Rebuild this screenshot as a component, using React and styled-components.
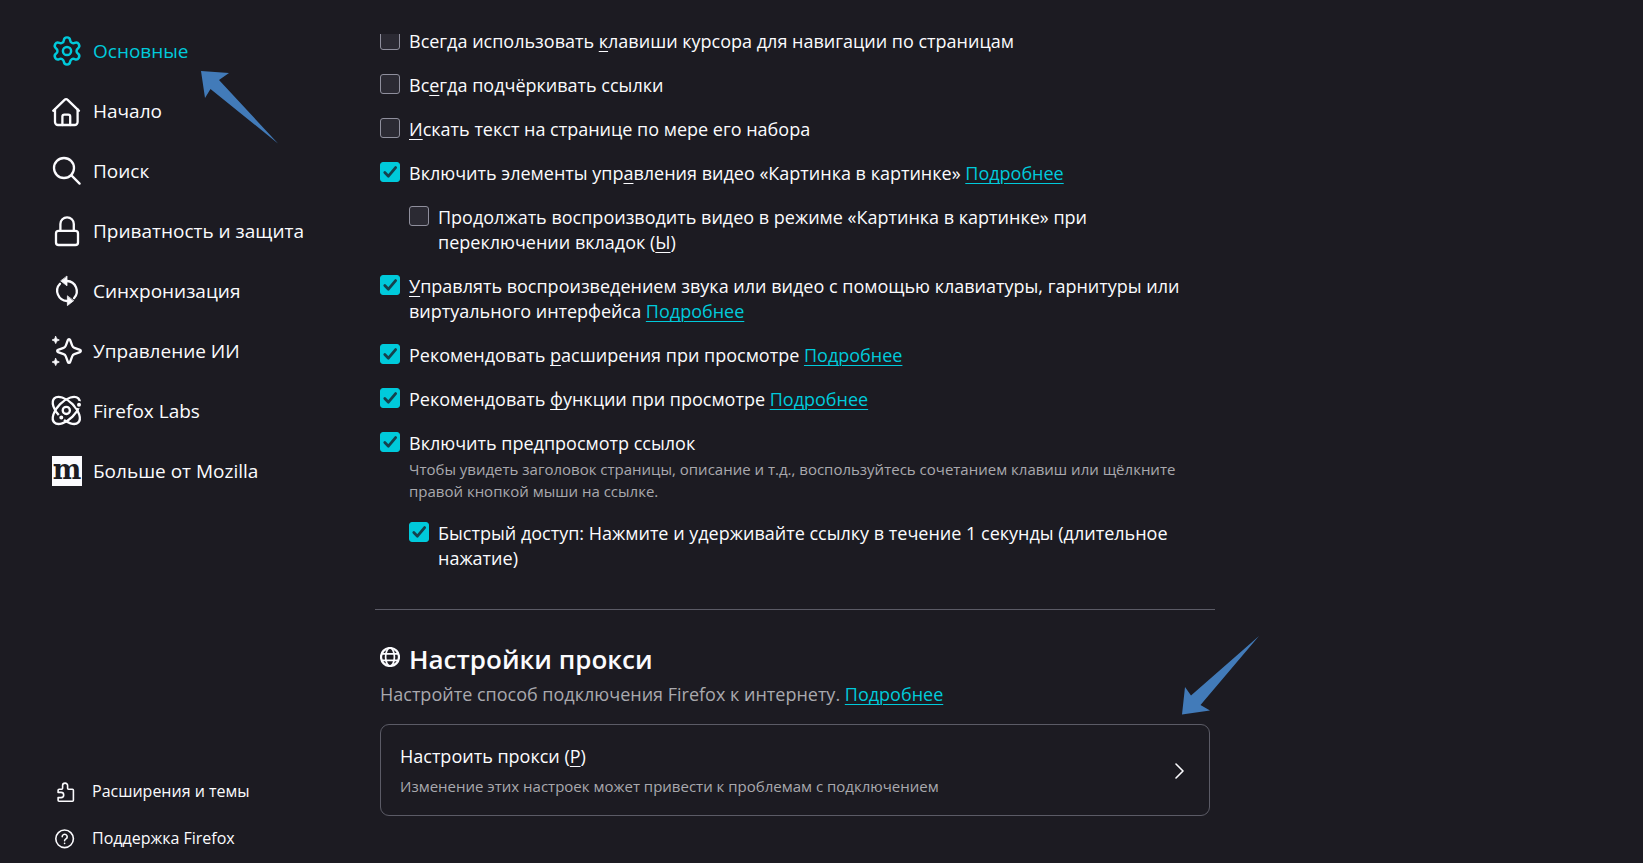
import React, { useState } from "react";
import styled, { createGlobalStyle } from "styled-components";
import { Settings } from "lucide-react";

const GlobalStyle = createGlobalStyle`
  * {
    box-sizing: border-box;
  }
  body {
    margin: 0;
    background: #1c1b22;
    color: #fbfbfe;
    font-family: "Open Sans", "Noto Sans", sans-serif;
    font-size: 18px;
    line-height: 25px;
  }
`;

const HomeIcon = () => (
  <NavSvg viewBox="0 0 30 30">
    <path d="M1.2 14.8 12.8 3.6a1.8 1.8 0 0 1 2.6 0L27 14.8" />
    <path d="M3 13.4V26a3 3 0 0 0 3 3h16.6a3 3 0 0 0 3-3V13.4" />
    <path d="M10.4 29v-8.4a2 2 0 0 1 2-2h3.8a2 2 0 0 1 2 2V29" />
  </NavSvg>
);

const SearchIcon = () => (
  <NavSvg viewBox="0 0 30 30">
    <circle cx="12" cy="12" r="10" />
    <path d="M19.4 19.4 27.6 27.6" />
  </NavSvg>
);

const LockIcon = () => (
  <NavSvg viewBox="0 0 30 30">
    <rect x="4" y="14.8" width="22" height="14.2" rx="2.6" />
    <path d="M8.4 14.6V8a6.7 6.7 0 0 1 13.4 0v6.6" />
  </NavSvg>
);

const SyncIcon = () => (
  <NavSvg viewBox="0 0 30 30">
    <path d="M15 5a10.2 10.2 0 0 1 7 17.2M15 25A10.2 10.2 0 0 1 8 7.8" />
    <path className="solid" d="M15 .4v9.4L9 5.1zM15.4 20.2v9.4l6-4.7z" />
  </NavSvg>
);

const SparkleIcon = () => (
  <NavSvg viewBox="0 0 30 30">
    <path d="M15.9 4c.4-1.1 1.8-1.1 2.2 0l2.1 5.6c.4 1.1 1.1 1.8 2.2 2.2l5.6 2.1c1.1.4 1.1 1.8 0 2.2l-5.6 2.1c-1.1.4-1.8 1.1-2.2 2.2L18.1 26c-.4 1.1-1.8 1.1-2.2 0l-2.1-5.6c-.4-1.1-1.1-1.8-2.2-2.2L6 16.1c-1.1-.4-1.1-1.8 0-2.2l5.6-2.1c1.1-.4 1.8-1.1 2.2-2.2z" />
    <path
      className="solid"
      d="M3.7.4 4.8 2.9 7.3 4 4.8 5.1 3.7 7.6 2.6 5.1.1 4l2.5-1.1zM3.7 22.4l1.1 2.5L7.3 26l-2.5 1.1-1.1 2.5-1.1-2.5L.1 26l2.5-1.1z"
    />
  </NavSvg>
);

const LabsIcon = () => (
  <NavSvg viewBox="0 0 30 30">
    <ellipse cx="14.3" cy="14.4" rx="17" ry="8.8" transform="rotate(45 14.3 14.4)" />
    <ellipse cx="14.3" cy="14.4" rx="17" ry="8.8" transform="rotate(-45 14.3 14.4)" />
    <circle cx="14.3" cy="14.4" r="3.6" />
    <circle className="dot" cx="9.3" cy="21.6" r="2.8" />
    <circle className="dot" cx="27" cy="8.7" r="2.8" />
  </NavSvg>
);

const PuzzleIcon = () => (
  <SmallSvg viewBox="0 0 20 20">
    <path d="M3.1 10.4V8.2a1 1 0 0 1 1-1h2.6a.9.9 0 0 0 .9-.9V3.6a2.5 2.5 0 0 1 5 0v2.7a.9.9 0 0 0 .9.9h3.9a1 1 0 0 1 1 1v10a1 1 0 0 1-1 1H4.1a1 1 0 0 1-1-1v-2.6h3a2.6 2.6 0 0 0 0-5.2z" />
  </SmallSvg>
);

const HelpIcon = () => (
  <SmallSvg viewBox="0 0 20 20">
    <circle cx="9.6" cy="9.8" r="8.8" />
    <path d="M7.2 7.8a2.5 2.5 0 1 1 3.8 2.1c-.9.6-1.4.9-1.4 1.9" />
    <path d="M9.6 14.2v.2" />
  </SmallSvg>
);

const GlobeIcon = () => (
  <SmallSvg viewBox="0 0 20 20">
    <circle cx="10" cy="10" r="9" strokeWidth="2.2" />
    <ellipse cx="10" cy="10" rx="4.4" ry="9" strokeWidth="1.7" />
    <path d="M1.8 6.8h16.4M1.8 13.4h16.4" strokeWidth="1.7" />
  </SmallSvg>
);

const MozillaMark = () => (
  <MozillaBox aria-hidden="true">
    <span>m</span>
  </MozillaBox>
);

const navItems = [
  {
    title: "Основные",
    icon: <Settings size={30} viewBox="1 1 22 22" strokeWidth={1.8} />,
    active: true,
  },
  { title: "Начало", icon: <HomeIcon /> },
  { title: "Поиск", icon: <SearchIcon /> },
  { title: "Приватность и защита", icon: <LockIcon /> },
  { title: "Синхронизация", icon: <SyncIcon /> },
  { title: "Управление ИИ", icon: <SparkleIcon /> },
  { title: "Firefox Labs", icon: <LabsIcon /> },
  { title: "Больше от Mozilla", icon: <MozillaMark /> },
];

const Option = ({ id, checked, nested, cut, more, note, children }) => {
  const [isOn, setIsOn] = useState(!!checked);

  return (
    <OptionRow $nested={nested}>
      <CheckWrap $cut={cut}>
        <CheckInput
          id={id}
          type="checkbox"
          checked={isOn}
          onChange={(e) => setIsOn(e.target.checked)}
        />
        {isOn && (
          <CheckMark viewBox="0 0 20 20">
            <path d="M4.8 10.6 8.4 14.2 15.6 5.6" />
          </CheckMark>
        )}
      </CheckWrap>
      <OptionBody>
        <label htmlFor={id}>{children}</label>
        {more && (
          <>
            {" "}
            <MoreLink href="#more">Подробнее</MoreLink>
          </>
        )}
        {note && <OptionNote>{note}</OptionNote>}
      </OptionBody>
    </OptionRow>
  );
};

export default function App() {
  return (
    <Page>
      <GlobalStyle />
      <Sidebar>
        <NavList>
          {navItems.map((item) => (
            <NavLink key={item.title} href="#nav" $active={item.active}>
              {item.icon}
              <span>{item.title}</span>
              {item.active && (
                <NavPointer viewBox="0 0 78 73">
                  <path d="M0 0 28 2 18 9 77 72.5 9.5 18 4 27z" />
                </NavPointer>
              )}
            </NavLink>
          ))}
        </NavList>
        <FooterList>
          <FooterLink href="#addons">
            <PuzzleIcon />
            <span>Расширения и темы</span>
          </FooterLink>
          <FooterLink href="#support">
            <HelpIcon />
            <span>Поддержка Firefox</span>
          </FooterLink>
        </FooterList>
      </Sidebar>

      <Content>
        <OptionList>
          <Option id="cursor" cut>
            Всегда использовать <u>к</u>лавиши курсора для навигации по страницам
          </Option>
          <Option id="underline">
            Вс<u>е</u>гда подчёркивать ссылки
          </Option>
          <Option id="typeahead">
            <u>И</u>скать текст на странице по мере его набора
          </Option>
          <Option id="pip" checked more>
            Включить элементы упр<u>а</u>вления видео «Картинка в картинке»
          </Option>
          <Option id="pip-tabs" nested>
            Продолжать воспроизводить видео в режиме «Картинка в картинке» при
            <br />
            переключении вкладок (<u>Ы</u>)
          </Option>
          <Option id="media" checked more>
            <u>У</u>правлять воспроизведением звука или видео с помощью клавиатуры,
            гарнитуры или
            <br />
            виртуального интерфейса
          </Option>
          <Option id="rec-addons" checked more>
            Рекомендовать <u>р</u>асширения при просмотре
          </Option>
          <Option id="rec-features" checked more>
            Рекомендовать <u>ф</u>ункции при просмотре
          </Option>
          <Option
            id="preview"
            checked
            note={
              <>
                Чтобы увидеть заголовок страницы, описание и т.д., воспользуйтесь
                сочетанием клавиш или щёлкните
                <br />
                правой кнопкой мыши на ссылке.
              </>
            }
          >
            Включить предпросмотр ссылок
          </Option>
          <Option id="long-press" checked nested>
            Быстрый доступ: Нажмите и удерживайте ссылку в течение 1 секунды
            (длительное
            <br />
            нажатие)
          </Option>
        </OptionList>

        <ProxySection>
          <ProxyTitle>
            <GlobeIcon />
            Настройки прокси
          </ProxyTitle>
          <ProxyText>
            Настройте способ подключения Firefox к интернету.{" "}
            <MoreLink href="#proxy">Подробнее</MoreLink>
          </ProxyText>
          <ProxyButton type="button">
            <span>
              <ProxyLabel>
                Настроить прокси (<u>P</u>)
              </ProxyLabel>
              <ProxyNote>
                Изменение этих настроек может привести к проблемам с подключением
              </ProxyNote>
            </span>
            <Chevron viewBox="0 0 10 16">
              <path d="M1 1 8 8 1 15" />
            </Chevron>
            <ProxyPointer viewBox="0 0 78 79">
              <path d="M0 78.5 28 74.5 18.5 69 77 0 9 59.5 3 51z" />
            </ProxyPointer>
          </ProxyButton>
        </ProxySection>
      </Content>
    </Page>
  );
}

const Page = styled.div`
  display: flex;
  min-height: 100vh;
`;

const Sidebar = styled.aside`
  display: flex;
  flex-direction: column;
  justify-content: space-between;
  flex: 0 0 375px;
  padding: 21px 20px 1px 52px;
`;

const NavList = styled.nav`
  display: flex;
  flex-direction: column;
  align-items: flex-start;
`;

const NavLink = styled.a`
  position: relative;
  display: flex;
  align-items: center;
  gap: 11px;
  height: 60px;
  font-size: 19px;
  color: ${(props) => (props.$active ? "#00cadb" : "#fbfbfe")};
  text-decoration: none;
`;

const NavSvg = styled.svg`
  width: 30px;
  height: 30px;
  overflow: visible;
  fill: none;
  stroke: currentColor;
  stroke-width: 2.3;
  stroke-linecap: round;
  stroke-linejoin: round;

  .solid {
    fill: currentColor;
    stroke-width: 0.8;
  }
  .dot {
    fill: currentColor;
    stroke: #1c1b22;
    stroke-width: 1.6;
  }
`;

const MozillaBox = styled.span`
  display: flex;
  justify-content: center;
  width: 30px;
  height: 30px;
  background: #fbfbfe;
  color: #1c1b22;
  font-family: "DejaVu Serif", serif;
  font-size: 27px;
  font-weight: 700;
  line-height: 27px;
`;

const FooterList = styled.div`
  display: flex;
  flex-direction: column;
  padding-left: 3px;
`;

const FooterLink = styled.a`
  display: flex;
  align-items: center;
  gap: 17px;
  height: 47px;
  font-size: 16px;
  color: #fbfbfe;
  text-decoration: none;
`;

const SmallSvg = styled.svg`
  flex: none;
  width: 20px;
  height: 20px;
  fill: none;
  stroke: currentColor;
  stroke-width: 1.6;
  stroke-linecap: round;
  stroke-linejoin: round;
`;

const Content = styled.main`
  flex: 0 1 840px;
  padding-top: 29px;
`;

const OptionList = styled.div`
  display: flex;
  flex-direction: column;
  gap: 19px;
  padding: 0 5px 38px;

  u {
    text-underline-offset: 3px;
    text-decoration-thickness: 1px;
    text-decoration-skip-ink: none;
  }
`;

const OptionRow = styled.div`
  display: flex;
  gap: 9px;
  padding-left: ${(props) => (props.$nested ? "29px" : "0")};
`;

const CheckWrap = styled.span`
  position: relative;
  display: flex;
  align-items: flex-end;
  flex: none;
  width: 20px;
  height: ${(props) => (props.$cut ? "16px" : "20px")};
  margin-top: ${(props) => (props.$cut ? "5px" : "1px")};
  overflow: hidden;
`;

const CheckInput = styled.input`
  appearance: none;
  flex: none;
  width: 20px;
  height: 20px;
  margin: 0;
  border: 1px solid #8f8f9d;
  border-radius: 3px;
  background: #2b2a33;

  &:checked {
    border-color: #00cadb;
    background: #00cadb;
  }
`;

const CheckMark = styled.svg`
  position: absolute;
  inset: 0;
  fill: none;
  stroke: #15414c;
  stroke-width: 2.8;
  stroke-linecap: round;
  stroke-linejoin: round;
  pointer-events: none;
`;

const OptionBody = styled.div`
  white-space: nowrap;
`;

const MoreLink = styled.a`
  color: #00cadb;
  text-decoration: underline 1px;
  text-underline-offset: 3px;
`;

const OptionNote = styled.div`
  padding-top: 2px;
  font-size: 15px;
  line-height: 22px;
  color: #a9a9ae;
`;

const ProxySection = styled.section`
  padding: 33px 5px 0;
  border-top: 1px solid #5b5b66;
`;

const ProxyTitle = styled.h2`
  display: flex;
  align-items: flex-start;
  gap: 9px;
  margin: 0;
  font-size: 26px;
  font-weight: 600;
  line-height: 32px;

  svg {
    margin-top: 4px;
  }
`;

const ProxyText = styled.p`
  margin: 7px 0 17px;
  color: #a9a9ae;
`;

const ProxyButton = styled.button`
  position: relative;
  display: flex;
  align-items: center;
  justify-content: space-between;
  width: 100%;
  padding: 19px 24px 18px 19px;
  border: 1px solid #5b5b66;
  border-radius: 9px;
  background: transparent;
  color: inherit;
  font: inherit;
  text-align: left;

  u {
    text-underline-offset: 3px;
    text-decoration-thickness: 1px;
  }
`;

const ProxyLabel = styled.span`
  display: block;
`;

const ProxyNote = styled.span`
  display: block;
  padding-top: 6px;
  font-size: 15px;
  line-height: 22px;
  color: #a9a9ae;
`;

const Chevron = styled.svg`
  width: 10px;
  height: 16px;
  fill: none;
  stroke: currentColor;
  stroke-width: 1.6;
  stroke-linecap: round;
  stroke-linejoin: round;
`;

const NavPointer = styled.svg`
  position: absolute;
  left: 149px;
  top: 50px;
  width: 78px;
  height: 73px;
  fill: #427bb9;
`;

const ProxyPointer = styled.svg`
  position: absolute;
  right: -51px;
  bottom: 100px;
  width: 78px;
  height: 79px;
  fill: #427bb9;
`;
